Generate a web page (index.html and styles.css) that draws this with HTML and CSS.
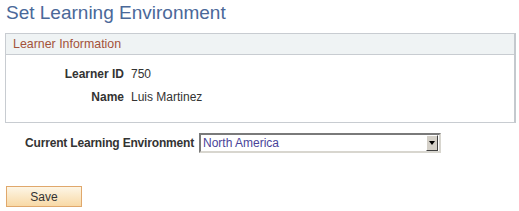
FILE: index.html
```html
<!DOCTYPE html>
<html>
<head>
<meta charset="utf-8">
<title>Set Learning Environment</title>
<link rel="stylesheet" href="styles.css">
</head>
<body>
<h1 class="page-title">Set Learning Environment</h1>
<section class="group">
  <div class="group-head">Learner Information</div>
  <div class="group-body">
    <div class="field"><span class="label">Learner ID</span><span class="value">750</span></div>
    <div class="field"><span class="label">Name</span><span class="value">Luis Martinez</span></div>
  </div>
</section>
<div class="env-row">
  <label class="env-label" for="env">Current Learning Environment</label>
  <div class="dropdown">
    <select id="env" class="dropdown-select"><option>North America</option></select>
    <span class="dropdown-btn"><span class="tri"></span></span>
  </div>
</div>
<div class="actions">
  <button class="save-btn" type="button">Save</button>
</div>
</body>
</html>
```
FILE: styles.css
```css
html, body {
  margin: 0;
  padding: 0;
  background: #ffffff;
}
body {
  font-family: "Liberation Sans", Arial, sans-serif;
  font-size: 12px;
  color: #333333;
  width: 519px;
}
.page-title {
  margin: 2px 0 0 6px;
  font-size: 19px;
  line-height: 22px;
  font-weight: normal;
  color: #4a6899;
}
.group {
  margin: 9px 0 0 5px;
  width: 508px;
  border: 1px solid #c8ccd1;
  border-right: 2px solid #c4c9ce;
}
.group-head {
  height: 20px;
  line-height: 20px;
  padding-left: 7px;
  background: #eff3f4;
  border-bottom: 1px solid #c8ccd1;
  color: #a3523a;
  font-size: 12.4px;
}
.group-body {
  padding: 8px 0 13px 0;
}
.field {
  display: flex;
  height: 23px;
  line-height: 23px;
}
.label {
  width: 118px;
  text-align: right;
  font-weight: bold;
  color: #333333;
}
.value {
  margin-left: 7px;
  color: #333333;
}
.env-row {
  display: flex;
  align-items: center;
  margin-top: 10px;
  height: 20px;
}
.env-label {
  width: 194px;
  text-align: right;
  font-weight: bold;
  letter-spacing: -0.18px;
  color: #333333;
}
.dropdown {
  margin-left: 5px;
  width: 238px;
  height: 16px;
  display: flex;
  align-items: center;
  border-top: 2px solid #7a7a7a;
  border-left: 2px solid #7a7a7a;
  border-bottom: 2px solid #d8d6cf;
  border-right: 2px solid #d8d6cf;
  background: #ffffff;
}
.dropdown-select {
  appearance: none;
  -webkit-appearance: none;
  flex: 1;
  height: 16px;
  border: none;
  outline: none;
  background: transparent;
  padding: 0 0 0 2px;
  margin: 0;
  font-family: "Liberation Sans", Arial, sans-serif;
  font-size: 12px;
  color: #4a4499;
}
.dropdown-btn {
  box-sizing: border-box;
  width: 12px;
  height: 16px;
  margin-right: 1px;
  background: #d4d0c8;
  border-top: 1px solid #ffffff;
  border-left: 1px solid #ffffff;
  border-bottom: 1px solid #404040;
  border-right: 1px solid #404040;
  display: flex;
  align-items: center;
  justify-content: center;
}
.tri {
  width: 0;
  height: 0;
  border-left: 3.5px solid transparent;
  border-right: 3.5px solid transparent;
  border-top: 4px solid #000000;
}
.actions {
  margin: 33px 0 0 6px;
}
.save-btn {
  width: 76px;
  height: 21px;
  padding: 0;
  border: 1px solid #e0a86c;
  background: linear-gradient(#fdf6e6, #f8d9a6);
  font-family: "Liberation Sans", Arial, sans-serif;
  font-size: 12px;
  color: #333333;
  border-radius: 0;
}
```
